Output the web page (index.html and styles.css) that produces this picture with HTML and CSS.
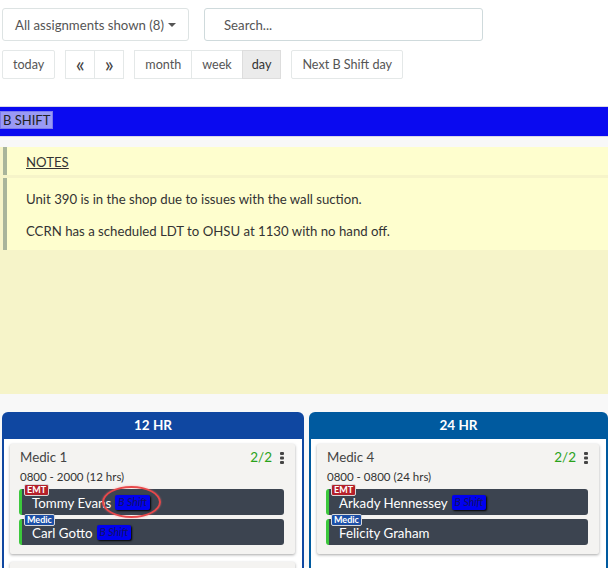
FILE: index.html
```html
<!DOCTYPE html>
<html>
<head>
<meta charset="utf-8">
<link rel="stylesheet" href="styles.css">
</head>
<body>
<div class="toolbar">
  <div class="row1">
    <button class="dropdown">All assignments shown (8) <span class="caret"></span></button>
    <div class="search">Search...</div>
  </div>
  <div class="row2">
    <button class="btn">today</button>
    <div class="group">
      <button class="btn arrow">&laquo;</button><button class="btn arrow">&raquo;</button>
    </div>
    <div class="group">
      <button class="btn">month</button><button class="btn">week</button><button class="btn active">day</button>
    </div>
    <button class="btn">Next B Shift day</button>
  </div>
</div>
<div class="shiftbar"><span class="shiftlabel">B SHIFT</span></div>
<div class="content">
  <div class="notes">
    <div class="note head"><span class="u">NOTES</span></div>
    <div class="note body">
      <p>Unit 390 is in the shop due to issues with the wall suction.</p>
      <p>CCRN has a scheduled LDT to OHSU at 1130 with no hand off.</p>
    </div>
  </div>
  <div class="columns">
    <div class="col c12">
      <div class="colhead">12 HR</div>
      <div class="colbody">
        <div class="card">
          <div class="cardtop"><span class="unit">Medic 1</span><span class="right"><span class="count">2/2</span><svg class="kebab" width="4" height="12" viewBox="0 0 4 12"><rect x="0" y="0" width="4" height="3" rx="1"/><rect x="0" y="4.5" width="4" height="3" rx="1"/><rect x="0" y="9" width="4" height="3" rx="1"/></svg></span></div>
          <div class="time">0800 - 2000 (12 hrs)</div>
          <div class="person"><span class="badge emt">EMT</span><span class="name">Tommy Evans</span><span class="tag">B Shift</span><span class="circle"></span></div>
          <div class="person"><span class="badge medic">Medic</span><span class="name">Carl Gotto</span><span class="tag">B Shift</span></div>
        </div>
        <div class="card stub"></div>
      </div>
    </div>
    <div class="col c24">
      <div class="colhead">24 HR</div>
      <div class="colbody">
        <div class="card">
          <div class="cardtop"><span class="unit">Medic 4</span><span class="right"><span class="count">2/2</span><svg class="kebab" width="4" height="12" viewBox="0 0 4 12"><rect x="0" y="0" width="4" height="3" rx="1"/><rect x="0" y="4.5" width="4" height="3" rx="1"/><rect x="0" y="9" width="4" height="3" rx="1"/></svg></span></div>
          <div class="time">0800 - 0800 (24 hrs)</div>
          <div class="person"><span class="badge emt">EMT</span><span class="name">Arkady Hennessey</span><span class="tag">B Shift</span></div>
          <div class="person"><span class="badge medic">Medic</span><span class="name">Felicity Graham</span></div>
        </div>
      </div>
    </div>
  </div>
</div>
</body>
</html>
```
FILE: styles.css
```css
* { box-sizing: border-box; }
html, body { margin: 0; padding: 0; background: #fff; overflow: hidden; }
body { font-family: Lato, "Open Sans", sans-serif; font-size: 13.2px; color: #333; width: 608px; height: 568px; }
button { font-family: inherit; margin: 0; }
.toolbar { padding: 8px 0 0 2px; }
.row1 { display: flex; gap: 15px; height: 33px; }
.dropdown { width: 187px; height: 33px; border: 1px solid #dde3e3; border-radius: 3px; background: #fff; color: #555; font-size: 13.2px; padding: 0 8px 0 12px; text-align: left; display: flex; align-items: center; gap: 4px; white-space: nowrap; }
.caret { display: inline-block; width: 0; height: 0; border-left: 4px solid transparent; border-right: 4px solid transparent; border-top: 4px solid #555; margin-top: 1px; }
.search { width: 279px; height: 33px; border: 1px solid #cfdadc; border-radius: 3px; color: #555; font-size: 13.2px; padding: 0 0 0 19px; display: flex; align-items: center; }
.row2 { display: flex; margin-top: 9px; gap: 10px; height: 29px; }
.group { display: flex; }
.btn { height: 29px; border: 1px solid #e4e8e8; background: #fff; color: #555; font-size: 12.6px; padding: 0 10px; border-radius: 2px; white-space: nowrap; }
.group .btn { border-radius: 0; }
.group .btn + .btn { margin-left: -1px; }
.btn.arrow { width: 30px; padding: 0 0 2px; font-size: 21px; line-height: 1; color: #444; }
.btn.active { background: #ebebeb; border-color: #ddd; color: #333; padding: 0 9px; }
.shiftbar { margin-top: 27px; border-top: 1px solid #d8d8e8; border-bottom: 1px solid #d8d8e8; background: #0a0af0; height: 31px; padding-top: 4px; }
.shiftlabel { display: inline-block; background: #9a9af5; border: 1px solid #7b7bea; color: #222; font-size: 13px; padding: 0 2px; height: 18px; line-height: 17px; }
.content { background: #f8f8f8; padding-top: 10px; height: 430px; }
.notes { background: #f6f4c9; height: 247px; padding-left: 3px; }
.note { background: #fefece; border-left: 4px solid #a9b59b; }
.note.head { height: 28px; padding: 7px 0 0 19px; margin-bottom: 3px; }
.u { text-decoration: underline; }
.note.body { height: 72px; padding: 11px 0 0 19px; }
.note.body p { margin: 0 0 12px; line-height: 20px; }
.columns { display: grid; grid-template-columns: 302px 299px; gap: 5px; padding-left: 2px; margin-top: 18px; }
.col { border-radius: 6px 6px 0 0; }
.c12 { background: #0f47a1; }
.c24 { background: #005a9f; }
.colhead { height: 27px; color: #fff; font-weight: bold; text-align: center; font-size: 13.5px; line-height: 27px; }
.colbody { background: #fff; margin: 0 2px; padding: 5px 7px 0 6px; height: 140px; }
.card { background: #f4f3f1; box-shadow: 0 1px 3px rgba(0,0,0,0.35); padding: 4px 11px 9px 9px; border-radius: 2px; }
.card.stub { margin-top: 8px; height: 20px; }
.cardtop { display: flex; justify-content: space-between; align-items: center; padding-left: 1px; height: 18px; }
.unit { font-size: 13.3px; color: #444; }
.right { display: flex; align-items: center; gap: 8px; }
.count { color: #2aa21a; font-size: 13.5px; }
.kebab { fill: #444; margin-top: 1px; }
.time { font-size: 11.5px; color: #333; padding-left: 1px; margin-top: 4px; height: 19px; }
.person { position: relative; background: #3c4450; border-left: 3px solid #3cc83c; border-radius: 3px; height: 26px; margin-bottom: 4px; color: #fff; display: flex; align-items: center; padding-left: 10px; padding-top: 2px; }
.person:last-child { margin-bottom: 0; }
.name { font-size: 13.3px; }
.badge { position: absolute; left: 2px; top: -5px; font-size: 9px; font-weight: bold; color: #fff; padding: 0 2px; height: 12px; line-height: 10px; border-radius: 2px; border: 1px solid #d8d8d8; }
.badge.emt { background: #b5202a; }
.badge.medic { background: #1c4fa6; }
.tag { margin-left: 4px; background: #0000f0; color: #111166; font-style: italic; font-size: 10.5px; height: 15px; line-height: 15px; padding: 0 3px; box-shadow: 1px 1px 2px #000; border-radius: 2px; margin-top: -1px; }
.circle { position: absolute; left: 80px; top: -3px; width: 59px; height: 32px; border: 2px solid #e8484a; border-radius: 50%; box-shadow: 0 0 2px rgba(255,120,120,0.6); }
```
